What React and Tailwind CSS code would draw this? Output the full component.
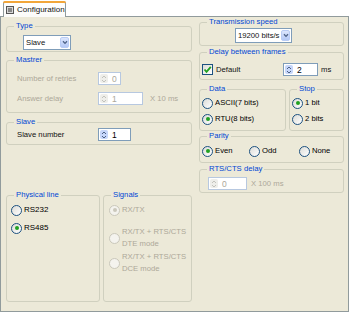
import React from 'react';

const Legend = ({ children }) => (
  <legend className="ml-[7px] px-[2px] h-[10px] leading-[10px] text-[#0046D5]">{children}</legend>
);

const Arrows = ({ disabled }) => (
  <svg width="6" height="8" viewBox="0 0 6 8">
    <path d="M1 3 L3 1 L5 3" fill="none" stroke={disabled ? '#C2C2BC' : '#4D6185'} strokeWidth="1" />
    <path d="M1 5 L3 7 L5 5" fill="none" stroke={disabled ? '#C2C2BC' : '#4D6185'} strokeWidth="1" />
  </svg>
);

const Spinner = ({ className, value, disabled }) => (
  <div
    className={`flex items-center h-[13px] bg-white border ${
      disabled ? 'border-[#B7C8E0] text-[#ACA899]' : 'border-[#7F9DB9] text-black'
    } ${className}`}
  >
    <div
      className={`ml-px w-[8px] h-[9px] rounded-[2px] flex items-center justify-center ${
        disabled ? 'bg-[#EEEEEA]' : 'bg-[#C6D6FA]'
      }`}
    >
      <Arrows disabled={disabled} />
    </div>
    <span className="ml-[4px] text-[8.5px]">{value}</span>
  </div>
);

const Select = ({ className, value }) => (
  <div className={`flex items-center h-[15px] bg-white border border-[#7F9DB9] ${className}`}>
    <span className="flex-1 pl-[2px] text-[7.7px] whitespace-nowrap overflow-hidden">{value}</span>
    <div className="mr-px w-[9px] h-[11px] shrink-0 rounded-[2px] bg-gradient-to-b from-[#DCE6FD] to-[#B4C8F6] border border-[#B9CCF5] flex items-center justify-center">
      <svg width="6" height="5" viewBox="0 0 6 5">
        <path d="M1 1.2 L3 3.4 L5 1.2" fill="none" stroke="#4D6185" strokeWidth="1.3" />
      </svg>
    </div>
  </div>
);

const Radio = ({ checked, disabled }) => (
  <span
    className={`w-[11px] h-[11px] rounded-full border flex items-center justify-center shrink-0 ${
      disabled ? 'border-[#CAC8BB] bg-[#F4F3EE]' : 'border-[#1C5180] bg-gradient-to-br from-[#DCDCD7] to-white'
    }`}
  >
    {checked && (
      <span className={`w-[4px] h-[4px] rounded-full ${disabled ? 'bg-[#CAC8BB]' : 'bg-[#21A121]'}`} />
    )}
  </span>
);

const RadioRow = ({ label, checked, className = '' }) => (
  <div className={`flex items-center gap-[2px] h-[12px] ${className}`}>
    <Radio checked={checked} />
    <span className="text-black">{label}</span>
  </div>
);

export default function App() {
  return (
    <div className="w-[350px] h-[313px] bg-white font-['Liberation_Sans',Arial,sans-serif] text-[7.7px] leading-[10px] text-[#111] whitespace-nowrap">
      {/* tab strip */}
      <div className="h-[16px] flex items-end pl-[3px]">
        <div className="relative z-10 -mb-px w-[63px] h-[16px] bg-gradient-to-b from-white to-[#FBFBF9] border border-b-0 border-[#919B9C] rounded-t-[3px] flex flex-col">
          <div className="h-[2px] -mx-px -mt-px rounded-t-[3px] bg-[#F2A63A]" />
          <div className="flex items-center gap-[3px] pl-[2px] h-[13px]">
            <svg width="8" height="8" viewBox="0 0 8 8">
              <rect x="0.5" y="0.5" width="7" height="7" fill="#D8D8D8" stroke="#555" />
              <rect x="2" y="2" width="4" height="4" fill="#888" />
            </svg>
            <span className="text-[8px]">Configuration</span>
          </div>
        </div>
      </div>

      {/* page */}
      <div className="w-[349px] h-[296px] bg-[#ECE9D8] border border-[#919B9C] flex gap-[7px] pl-[5px]">
        {/* left column */}
        <div className="w-[186px] pt-[4px] flex flex-col">
          <fieldset className="h-[31px] border border-[#D0D0BF] rounded-[3px] min-w-0">
            <Legend>Type</Legend>
            <div className="pl-[16px] mt-[4px]">
              <Select className="w-[48px] h-[14px]" value="Slave" />
            </div>
          </fieldset>

          <fieldset className="mt-[3px] h-[58px] border border-[#D0D0BF] rounded-[3px] min-w-0">
            <Legend>Mastrer</Legend>
            <div className="pl-[10px] mt-[7px] flex flex-col gap-[7px] text-[#ACA899]">
              <div className="flex items-center h-[13px]">
                <span className="w-[81px]">Number of retries</span>
                <Spinner className="w-[23px]" value="0" disabled />
              </div>
              <div className="flex items-center h-[13px]">
                <span className="w-[81px]">Answer delay</span>
                <Spinner className="w-[45px]" value="1" disabled />
                <span className="ml-[7px]">X 10 ms</span>
              </div>
            </div>
          </fieldset>

          <fieldset className="mt-[4px] h-[28px] border border-[#D0D0BF] rounded-[3px] min-w-0">
            <Legend>Slave</Legend>
            <div className="pl-[10px] mt-[1px] flex items-center h-[13px]">
              <span className="w-[81px]">Slave number</span>
              <Spinner className="w-[33px]" value="1" />
            </div>
          </fieldset>

          <div className="mt-[45px] flex gap-[3px]">
            <fieldset className="w-[94px] h-[112px] border border-[#D0D0BF] rounded-[3px] min-w-0">
              <Legend>Physical line</Legend>
              <div className="pl-[4px] mt-[4px] flex flex-col gap-[6px] text-[8px]">
                <RadioRow label="RS232" />
                <RadioRow label="RS485" checked />
              </div>
            </fieldset>

            <fieldset className="w-[89px] h-[112px] border border-[#D0D0BF] rounded-[3px] min-w-0">
              <Legend>Signals</Legend>
              <div className="pl-[5px] mt-[4px] flex flex-col text-[#ACA899] leading-[12px]">
                <div className="flex items-center gap-[2px] h-[12px]">
                  <Radio checked disabled />
                  <span>RX/TX</span>
                </div>
                <div className="mt-[10px] flex items-center gap-[2px]">
                  <Radio disabled />
                  <span>
                    RX/TX + RTS/CTS
                    <br />
                    DTE mode
                  </span>
                </div>
                <div className="mt-[1px] flex items-center gap-[2px]">
                  <Radio disabled />
                  <span>
                    RX/TX + RTS/CTS
                    <br />
                    DCE mode
                  </span>
                </div>
              </div>
            </fieldset>
          </div>
        </div>

        {/* right column */}
        <div className="w-[145px] flex flex-col">
          <fieldset className="h-[29px] border border-[#D0D0BF] rounded-[3px] min-w-0">
            <Legend>Transmission speed</Legend>
            <div className="pl-[35px] mt-[1px]">
              <Select className="w-[57px]" value="19200 bits/s" />
            </div>
          </fieldset>

          <fieldset className="mt-[1px] h-[33px] border border-[#D0D0BF] rounded-[3px] min-w-0">
            <Legend>Delay between frames</Legend>
            <div className="pl-[2px] mt-[6px] flex items-center h-[13px]">
              <span className="w-[11px] h-[11px] border border-[#1C5180] bg-gradient-to-br from-[#DCDCD7] to-white flex items-center justify-center">
                <svg width="9" height="9" viewBox="0 0 9 9">
                  <path d="M1.5 4.5 L3.5 6.8 L7.8 1.8" fill="none" stroke="#21A121" strokeWidth="1.8" />
                </svg>
              </span>
              <span className="ml-[3px] w-[67px]">Default</span>
              <Spinner className="w-[35px]" value="2" />
              <span className="ml-[3px]">ms</span>
            </div>
          </fieldset>

          <div className="mt-[4px] flex gap-[3px]">
            <fieldset className="w-[87px] h-[47px] border border-[#D0D0BF] rounded-[3px] min-w-0">
              <Legend>Data</Legend>
              <div className="pl-[2px] mt-[3px] flex flex-col gap-[4px]">
                <RadioRow label="ASCII(7 bits)" />
                <RadioRow label="RTU(8 bits)" checked />
              </div>
            </fieldset>
            <fieldset className="w-[55px] h-[47px] border border-[#D0D0BF] rounded-[3px] min-w-0">
              <Legend>Stop</Legend>
              <div className="pl-[2px] mt-[3px] flex flex-col gap-[4px]">
                <RadioRow label="1 bit" checked />
                <RadioRow label="2 bits" />
              </div>
            </fieldset>
          </div>

          <fieldset className="h-[32px] border border-[#D0D0BF] rounded-[3px] min-w-0">
            <Legend>Parity</Legend>
            <div className="pl-[2px] mt-[4px] flex">
              <RadioRow label="Even" checked className="w-[47px]" />
              <RadioRow label="Odd" className="w-[50px]" />
              <RadioRow label="None" />
            </div>
          </fieldset>

          <fieldset className="mt-[1px] h-[29px] border border-[#D0D0BF] rounded-[3px] min-w-0">
            <Legend>RTS/CTS delay</Legend>
            <div className="pl-[8px] mt-[3px] flex items-center h-[13px] text-[#ACA899]">
              <Spinner className="w-[39px]" value="0" disabled />
              <span className="ml-[4px]">X 100 ms</span>
            </div>
          </fieldset>
        </div>
      </div>
    </div>
  );
}
